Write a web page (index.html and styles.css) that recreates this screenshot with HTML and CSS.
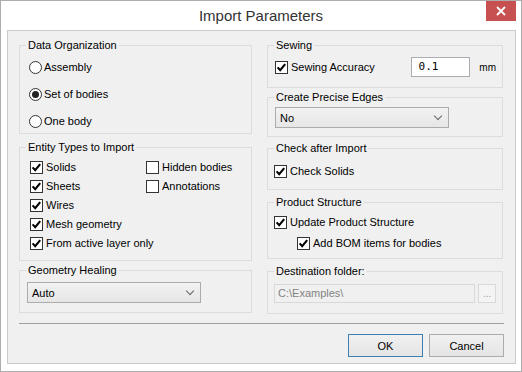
FILE: index.html
```html
<!DOCTYPE html>
<html>
<head>
<meta charset="utf-8">
<link rel="stylesheet" href="styles.css">
</head>
<body>
<div class="window">
  <div class="titlebar">
    <span class="title">Import Parameters</span>
    <span class="close"><svg width="10" height="10" viewBox="0 0 10 10"><path d="M1 1 L9 9 M9 1 L1 9" stroke="#fff" stroke-width="1.8"/></svg></span>
  </div>
  <div class="client">
    <div class="columns">
      <div class="col">
        <fieldset class="group g-data">
          <legend>Data Organization</legend>
          <div class="radios">
            <label class="opt"><span class="rb"></span>Assembly</label>
            <label class="opt"><span class="rb on"></span>Set of bodies</label>
            <label class="opt"><span class="rb"></span>One body</label>
          </div>
        </fieldset>
        <fieldset class="group g-entity">
          <legend>Entity Types to Import</legend>
          <div class="entity-grid">
            <label class="opt"><span class="cb on"></span>Solids</label>
            <label class="opt"><span class="cb"></span>Hidden bodies</label>
            <label class="opt"><span class="cb on"></span>Sheets</label>
            <label class="opt"><span class="cb"></span>Annotations</label>
            <label class="opt"><span class="cb on"></span>Wires</label>
            <span></span>
            <label class="opt wide"><span class="cb on"></span>Mesh geometry</label>
            <label class="opt wide"><span class="cb on"></span>From active layer only</label>
          </div>
        </fieldset>
        <fieldset class="group g-heal">
          <legend>Geometry Healing</legend>
          <div class="combo combo-heal"><span>Auto</span><span class="chev"></span></div>
        </fieldset>
      </div>
      <div class="col">
        <fieldset class="group g-sew">
          <legend>Sewing</legend>
          <div class="sew-row">
            <label class="opt"><span class="cb on"></span>Sewing Accuracy</label>
            <span class="num">0.1</span>
            <span class="unit">mm</span>
          </div>
        </fieldset>
        <fieldset class="group g-edges">
          <legend>Create Precise Edges</legend>
          <div class="combo combo-edges"><span>No</span><span class="chev"></span></div>
        </fieldset>
        <fieldset class="group g-check">
          <legend>Check after Import</legend>
          <label class="opt"><span class="cb on"></span>Check Solids</label>
        </fieldset>
        <fieldset class="group g-product">
          <legend>Product Structure</legend>
          <div class="stack">
            <label class="opt"><span class="cb on"></span>Update Product Structure</label>
            <label class="opt indent"><span class="cb on"></span>Add BOM items for bodies</label>
          </div>
        </fieldset>
        <fieldset class="group g-dest">
          <legend>Destination folder:</legend>
          <div class="dest-row">
            <span class="path">C:\Examples\</span>
            <span class="browse">...</span>
          </div>
        </fieldset>
      </div>
    </div>
    <div class="separator"></div>
    <div class="buttons">
      <span class="btn default">OK</span>
      <span class="btn">Cancel</span>
    </div>
  </div>
</div>
</body>
</html>
```

FILE: styles.css
```css
* { box-sizing: border-box; }
html, body { margin: 0; padding: 0; background: #fff; }
body { font-family: "Liberation Sans", Arial, sans-serif; font-size: 11px; color: #000; }

.window {
  width: 522px; height: 372px;
  border: 1px solid #adadad;
  background: #fff;
  display: flex; flex-direction: column;
}
.titlebar {
  height: 29px;
  display: grid;
  grid-template-columns: 1fr auto 1fr;
  align-items: start;
}
.title {
  grid-column: 2;
  font-size: 15px; color: #333;
  line-height: 20px; margin-top: 5px;
}
.close {
  grid-column: 3; justify-self: end;
  width: 30px; height: 20px; margin-right: 5px;
  background: #c75050;
  display: flex; align-items: center; justify-content: center;
}
.client {
  margin: 0 5px 7px 6px;
  height: 334px;
  border: 1px solid #cacaca;
  background: #f0f0f0;
  padding: 6px 11px 0 11px;
}
.columns {
  display: grid;
  grid-template-columns: 233px 236px;
  column-gap: 15px;
}
.col { display: flex; flex-direction: column; }

.group {
  margin: 0; border: 1px solid #dcdcdc;
  padding: 0 6px 0 6px;
  min-width: 0;
}
.group legend {
  padding: 0 2px; margin-left: 0;
  line-height: 16px; color: #000;
}
.g-data { height: 97px; }
.g-entity { height: 122px; margin-top: 5px; }
.g-heal { height: 51px; margin-top: 1px; }
.g-sew { height: 51px; }
.g-edges { height: 48px; margin-top: 1px; }
.g-check { height: 50px; margin-top: 3px; }
.g-product { height: 65px; margin-top: 4px; }
.g-dest { height: 51px; margin-top: 4px; }

.opt {
  display: flex; align-items: center;
  height: 19px; line-height: 19px;
  white-space: nowrap;
}
.cb {
  width: 13px; height: 13px; flex: none;
  border: 1px solid #333; background: #fff;
  margin-right: 3px;
  display: inline-block;
}
.cb.on {
  background: #fff url("data:image/svg+xml;utf8,<svg xmlns='http://www.w3.org/2000/svg' width='11' height='11' viewBox='0 0 11 11'><path d='M1.6 5.4 L4.2 8.2 L9.2 2.2' fill='none' stroke='%23000' stroke-width='2.1'/></svg>") no-repeat center;
}
.rb {
  width: 13px; height: 13px; flex: none;
  border: 1px solid #333; border-radius: 50%; background: #fff;
  margin-right: 2px;
  display: flex; align-items: center; justify-content: center;
}
.rb.on::after {
  content: ""; width: 7px; height: 7px; border-radius: 50%; background: #222;
}

.radios { display: flex; flex-direction: column; gap: 7px; padding: 4px 0 0 3px; }
.radios .opt { height: 20px; }

.entity-grid {
  display: grid; grid-template-columns: 116px 1fr;
  padding: 3px 0 0 4px;
}
.entity-grid .wide { grid-column: 1 / 3; }

.combo {
  height: 21px;
  border: 1px solid #acacac;
  background: linear-gradient(#f2f2f2, #e6e6e6);
  display: flex; align-items: center; justify-content: space-between;
  padding: 0 7px 0 4px;
}
.chev {
  width: 6px; height: 6px;
  border-right: 1.5px solid #666; border-bottom: 1.5px solid #666;
  transform: rotate(45deg); margin-top: -4px;
}
.combo-heal { width: 174px; margin: 4px 0 0 1px; }
.combo-edges { width: 174px; margin: 2px 0 0 1px; }

.sew-row { display: flex; align-items: center; padding: 4px 0 0 1px; }
.sew-row .opt { width: 139px; }
.num {
  width: 61px; height: 20px;
  border: 1px solid #abadb3; background: #fff;
  font-family: "DejaVu Sans Mono", "Liberation Mono", monospace; font-size: 11px;
  line-height: 18px; padding-left: 7px;
}
.unit { margin-left: 9px; font-size: 10px; }

.g-check .opt { margin: 6px 0 0 0; }

.stack { display: flex; flex-direction: column; gap: 2px; padding: 3px 0 0 0; }
.indent { padding-left: 23px; }

.dest-row { display: flex; align-items: center; gap: 3px; padding: 5px 0 0 0; }
.path {
  width: 203px; height: 19px;
  border: 1px solid #d9d9d9; background: #f0f0f0;
  color: #838383; line-height: 17px; padding-left: 3px;
}
.browse {
  width: 18px; height: 19px;
  border: 1px solid #d9d9d9; background: #f4f4f4;
  color: #9a9a9a; font-size: 10px; line-height: 17px; text-align: center;
}

.separator { height: 1px; background: #a0a0a0; margin-top: 9px; }
.buttons { display: flex; justify-content: flex-end; gap: 6px; margin-top: 10px; }
.btn {
  width: 75px; height: 23px;
  border: 1px solid #acacac;
  background: linear-gradient(#f0f0f0, #e5e5e5);
  display: flex; align-items: center; justify-content: center;
}
.btn.default { border-color: #3c7fb1; }
```
